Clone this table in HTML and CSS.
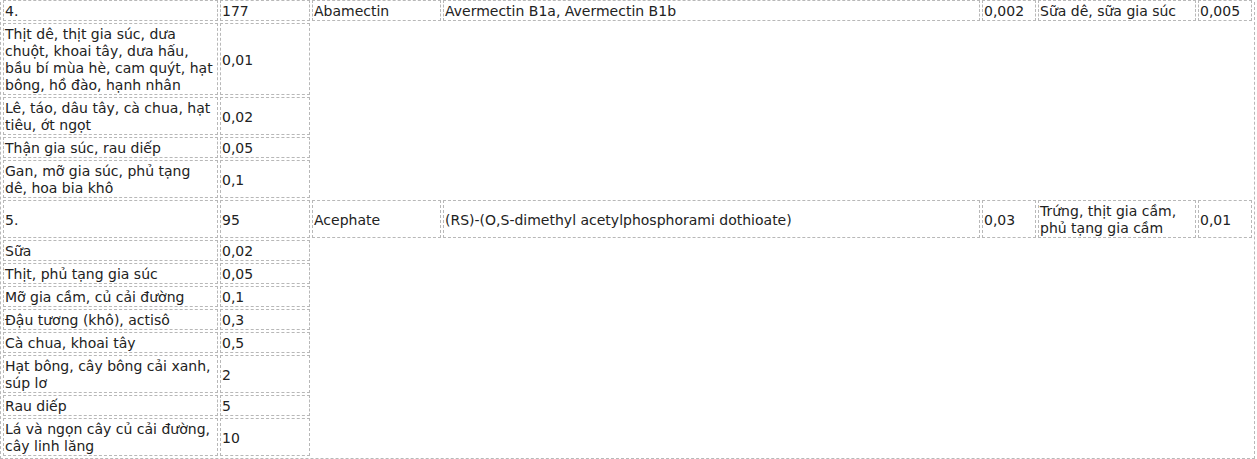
FILE: index.html
```html
<!DOCTYPE html>
<html lang="vi">
<head>
    <meta charset="UTF-8">
    <title>Giới hạn dư lượng thuốc bảo vệ thực vật</title>
    <link rel="stylesheet" href="styles.css">
</head>
<body>
    <table class="mrl-table">
        <tr>
            <td class="col-food">4.</td>
            <td class="col-value">177</td>
            <td class="col-name">Abamectin</td>
            <td class="col-chem">Avermectin B1a, Avermectin B1b</td>
            <td class="col-adi">0,002</td>
            <td class="col-item">Sữa dê, sữa gia súc</td>
            <td class="col-mrl">0,005</td>
        </tr>
        <tr>
            <td>Thịt dê, thịt gia súc, dưa chuột, khoai tây, dưa hấu, bầu bí mùa hè, cam quýt, hạt bông, hồ đào, hạnh nhân</td>
            <td>0,01</td>
        </tr>
        <tr>
            <td>Lê, táo, dâu tây, cà chua, hạt tiêu, ớt ngọt</td>
            <td>0,02</td>
        </tr>
        <tr>
            <td>Thận gia súc, rau diếp</td>
            <td>0,05</td>
        </tr>
        <tr>
            <td>Gan, mỡ gia súc, phủ tạng dê, hoa bia khô</td>
            <td>0,1</td>
        </tr>
        <tr>
            <td>5.</td>
            <td>95</td>
            <td>Acephate</td>
            <td>(RS)-(O,S-dimethyl acetylphosphorami dothioate)</td>
            <td>0,03</td>
            <td>Trứng, thịt gia cầm, phủ tạng gia cầm</td>
            <td>0,01</td>
        </tr>
        <tr>
            <td>Sữa</td>
            <td>0,02</td>
        </tr>
        <tr>
            <td>Thịt, phủ tạng gia súc</td>
            <td>0,05</td>
        </tr>
        <tr>
            <td>Mỡ gia cầm, củ cải đường</td>
            <td>0,1</td>
        </tr>
        <tr>
            <td>Đậu tương (khô), actisô</td>
            <td>0,3</td>
        </tr>
        <tr>
            <td>Cà chua, khoai tây</td>
            <td>0,5</td>
        </tr>
        <tr>
            <td>Hạt bông, cây bông cải xanh, súp lơ</td>
            <td>2</td>
        </tr>
        <tr>
            <td>Rau diếp</td>
            <td>5</td>
        </tr>
        <tr>
            <td>Lá và ngọn cây củ cải đường, cây linh lăng</td>
            <td>10</td>
        </tr>
    </table>
</body>
</html>
```

FILE: styles.css
```css
body {
    margin: 0;
    background: #fff;
    font-family: "DejaVu Sans", Verdana, sans-serif;
    font-size: 14px;
    line-height: 17px;
    color: #222;
}

.mrl-table {
    margin-top: -3px;
    width: 1254px;
    table-layout: fixed;
    border: 1px dashed #b8b8b8;
    border-spacing: 2px;
}

.mrl-table td {
    box-sizing: border-box;
    padding: 2px 1px 0;
    border: 1px dashed #b8b8b8;
    vertical-align: middle;
    text-align: left;
}

/* column widths, set on the first row */
.col-food  { width: 215px; }
.col-value { width: 90px; }
.col-name  { width: 129px; }
.col-chem  { width: 537px; }
.col-adi   { width: 54px; }
.col-item  { width: 158px; }
.col-mrl   { width: 54px; }
```
